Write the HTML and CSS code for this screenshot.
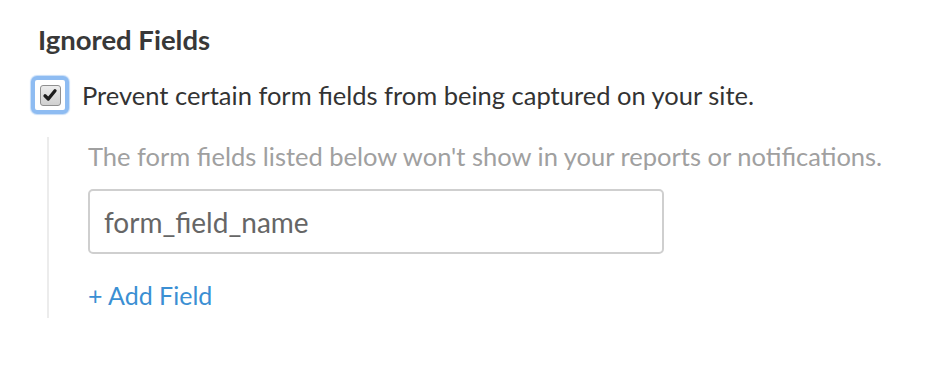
FILE: index.html
```html
<!DOCTYPE html>
<html>
<head>
<meta charset="utf-8">
<link rel="stylesheet" href="styles.css">
</head>
<body>
<section class="panel">
  <h2 class="title">Ignored Fields</h2>
  <label class="check-row">
    <span class="check-ring">
      <span class="check-box">
        <svg viewBox="0 0 16 16" width="16" height="16"><path d="M3 8.8 L6.3 12 L13 3.8" fill="none" stroke="#1e1e1e" stroke-width="3.3" stroke-linecap="round" stroke-linejoin="round"/></svg>
      </span>
    </span>
    <span class="check-text">Prevent certain form fields from being captured on your site.</span>
  </label>
  <div class="nested">
    <p class="hint">The form fields listed below won't show in your reports or notifications.</p>
    <input class="field" type="text" placeholder="form_field_name">
    <a class="add-link" href="#">+ Add Field</a>
  </div>
</section>
</body>
</html>
```

FILE: styles.css
```css
html, body {
  margin: 0;
  padding: 0;
  background: #fff;
}
body {
  font-family: "Lato", "Open Sans", sans-serif;
  color: #333;
}
.panel {
  padding: 22px 0 0 38px;
}
.title {
  margin: 0;
  font-size: 27.5px;
  font-weight: 700;
  color: #383838;
  line-height: 36px;
}
.check-row {
  display: flex;
  align-items: center;
  gap: 13px;
  margin-top: 18px;
  margin-left: -7px;
}
.check-ring {
  width: 30px;
  height: 30px;
  border: 4px solid #8ebcf2;
  border-radius: 6px;
  box-shadow: 0 0 1px 1px #c6ddf8;
  display: flex;
  align-items: center;
  justify-content: center;
  background: #fff;
}
.check-box {
  width: 21px;
  height: 21px;
  box-sizing: border-box;
  border: 1px solid #8f8f8f;
  border-radius: 3px;
  background: linear-gradient(#ececec, #d0d0d0);
  display: flex;
  align-items: center;
  justify-content: center;
}
.check-text {
  font-size: 25.5px;
  color: #333;
}
.nested {
  margin: 23px 0 0 9px;
  border-left: 2px solid #ececec;
  padding: 3px 0 8px 39px;
  width: 820px;
}
.hint {
  margin: 0;
  font-size: 25.5px;
  color: #a0a0a0;
  line-height: 32px;
}
.field {
  display: block;
  margin-top: 17px;
  width: 576px;
  height: 65px;
  box-sizing: border-box;
  border: 2px solid #cfcfcf;
  border-radius: 5px;
  padding: 0 14px;
  font-family: inherit;
  font-size: 28px;
  color: #333;
}
.field::placeholder {
  color: #666;
}
.add-link {
  display: inline-block;
  margin-top: 26px;
  font-size: 25px;
  color: #3b8fd3;
  text-decoration: none;
}
```
